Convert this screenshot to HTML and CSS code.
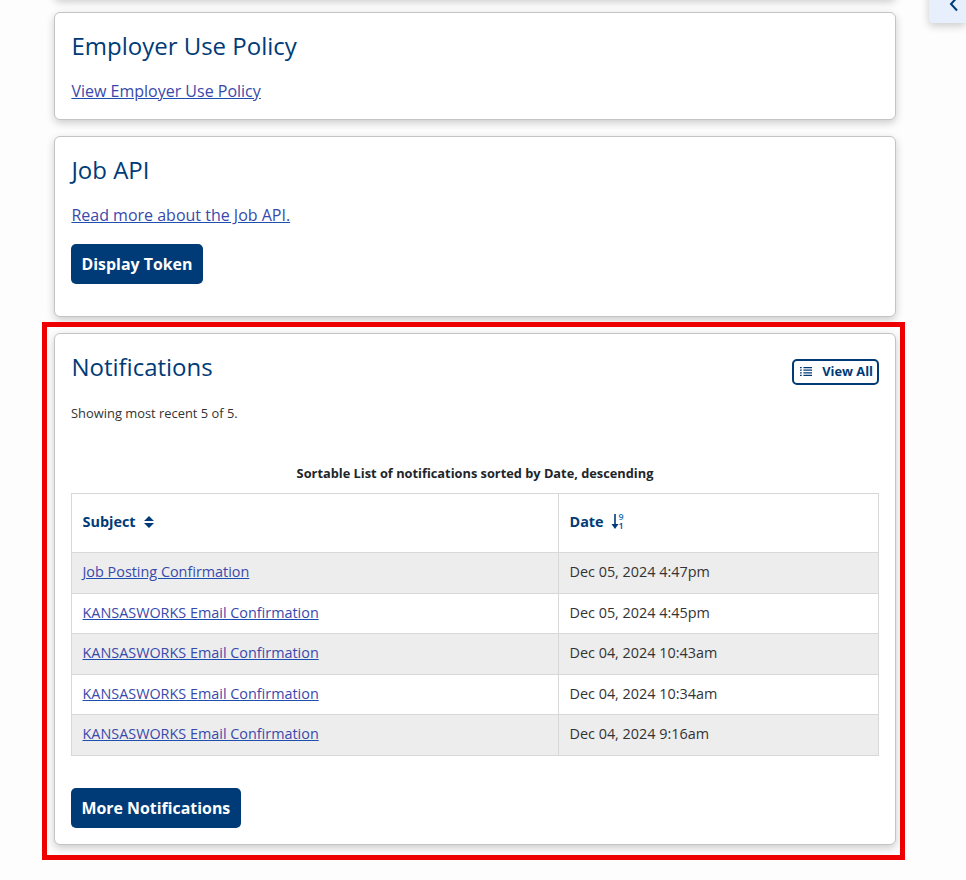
FILE: index.html
```html
<!DOCTYPE html>
<html lang="en">
<head>
<meta charset="utf-8">
<title>Employer Dashboard</title>
<link rel="stylesheet" href="styles.css">
</head>
<body>
<aside class="side-tab">
  <svg class="side-chevron" viewBox="0 0 10 16" width="10" height="16" aria-hidden="true"><path d="M8 1.5 2 8l6 6.5" fill="none" stroke="#003b77" stroke-width="2"/></svg>
</aside>
<main class="column">
  <div class="card card-cut"></div>
  <section class="card policy">
    <h2 class="card-title">Employer Use Policy</h2>
    <a class="link" href="#">View Employer Use Policy</a>
  </section>
  <section class="card api">
    <h2 class="card-title">Job API</h2>
    <p class="api-link"><a class="link" href="#">Read more about the Job API.</a></p>
    <button class="btn" type="button">Display Token</button>
  </section>
  <div class="highlight">
    <section class="card notifications">
      <div class="notif-head">
        <h2 class="card-title">Notifications</h2>
        <a class="view-all" href="#">
          <svg viewBox="0 0 14 12" width="12" height="11" aria-hidden="true"><path d="M0 1.5h2M4 1.5h10M0 4.5h2M4 4.5h10M0 7.5h2M4 7.5h10M0 10.5h2M4 10.5h10" stroke="#003b77" stroke-width="1.4" fill="none"/></svg>
          <span>View All</span>
        </a>
      </div>
      <p class="showing">Showing most recent 5 of 5.</p>
      <table class="table">
        <caption class="caption">Sortable List of notifications sorted by Date, descending</caption>
        <thead>
          <tr>
            <th class="col-subject"><span class="th-in">Subject
              <svg viewBox="0 0 10 12" width="10" height="12" aria-hidden="true"><path d="M5 0 10 5H0zM5 12 0 7h10z" fill="#003b77"/></svg></span></th>
            <th><span class="th-in">Date
              <span class="sort-num"><svg viewBox="0 0 8 15" width="8" height="15" aria-hidden="true"><path d="M4 0v11" stroke="#003b77" stroke-width="1.6"/><path d="M0.5 10h7L4 15z" fill="#003b77"/></svg><span class="digits"><b class="digit-top">9</b><b class="digit-bottom">1</b></span></span></span></th>
          </tr>
        </thead>
        <tbody>
          <tr class="odd"><td><a class="link" href="#">Job Posting Confirmation</a></td><td>Dec 05, 2024 4:47pm</td></tr>
          <tr><td><a class="link" href="#">KANSASWORKS Email Confirmation</a></td><td>Dec 05, 2024 4:45pm</td></tr>
          <tr class="odd"><td><a class="link" href="#">KANSASWORKS Email Confirmation</a></td><td>Dec 04, 2024 10:43am</td></tr>
          <tr><td><a class="link" href="#">KANSASWORKS Email Confirmation</a></td><td>Dec 04, 2024 10:34am</td></tr>
          <tr class="odd"><td><a class="link" href="#">KANSASWORKS Email Confirmation</a></td><td>Dec 04, 2024 9:16am</td></tr>
        </tbody>
      </table>
      <button class="btn" type="button">More Notifications</button>
    </section>
  </div>
</main>
</body>
</html>
```
FILE: styles.css
```css
* { box-sizing: border-box; }
html, body { height: 880px; overflow: hidden; }
body {
  margin: 0;
  background: #fdfdfd;
  font-family: "Open Sans", "Liberation Sans", sans-serif;
  color: #333;
  position: relative;
}
.side-tab {
  position: absolute;
  top: -10px;
  right: 0;
  width: 37px;
  height: 33px;
  background: #e6effb;
  border-radius: 0 0 0 4px;
  box-shadow: 0 3px 8px rgba(0,0,0,.2);
}
.side-chevron { position: absolute; left: 20px; top: 6px; }
.column { display: flex; flex-direction: column; }
.card {
  width: 842px;
  margin-left: 54px;
  background: #fff;
  border: 1px solid #c4c4c4;
  border-radius: 6px;
  box-shadow: 0 3px 8px rgba(0,0,0,.2);
}
.card-cut { height: 20px; margin-top: -21px; margin-bottom: 13px; }
.policy { height: 108px; padding: 16px; margin-bottom: 16px; }
.api { height: 181px; padding: 16px; margin-bottom: 5px; }
.card-title {
  margin: 0 0 0 .4px;
  font-size: 24px;
  font-weight: 400;
  line-height: 34px;
  color: #003b77;
}
.link { color: #3949ab; text-decoration: underline; text-decoration-color: #1d4fb0; font-size: 16px; }
.policy .link { display: block; margin: 17px 0 0 .4px; line-height: 22px; }
.api-link { margin: 17px 0 18px .4px; line-height: 22px; }
.btn {
  display: block;
  height: 40px;
  padding: 0 10.5px;
  border: 0;
  border-radius: 5px;
  background: #003b77;
  color: #fff;
  font: 700 15.9px/40px "Open Sans", "Liberation Sans", sans-serif;
}
.highlight {
  margin-left: 42px;
  width: 863px;
  height: 538px;
  border: 5px solid #ee0000;
  padding: 6px 4px 0 7px;
}
.notifications { margin-left: 0; height: 512px; padding: 16px 16px 0 16px; }
.notif-head { display: flex; justify-content: space-between; align-items: flex-start; }
.view-all {
  display: flex;
  align-items: center;
  gap: 10px;
  margin-top: 9px;
  height: 26px;
  padding: 0 4px 3px 6px;
  border: 2px solid #003b77;
  border-radius: 5px;
  color: #003b77;
  font-size: 12.8px;
  font-weight: 700;
  text-decoration: none;
}
.view-all svg { margin-top: 2px; }
.showing { margin: 18px 0 0; font-size: 12.9px; line-height: 20px; }
.table {
  width: 100%;
  margin-top: 40px;
  border-collapse: collapse;
  table-layout: fixed;
  font-size: 14.4px;
}
.caption {
  caption-side: top;
  height: 30px;
  font-size: 12.8px;
  font-weight: 700;
  line-height: 20px;
  color: #212529;
  text-align: center;
}
.table th, .table td {
  border: 1px solid #d8d8d8;
  padding: 0 10.5px 2px;
  text-align: left;
}
.col-subject { width: 487px; }
.table th { height: 59px; padding-bottom: 3px; color: #003b77; font-size: 14.4px; font-weight: 700; }
.table td { height: 40.5px; }
.table td .link { font-size: 14.4px; }
.odd { background: #ededed; }
.th-in { display: inline-flex; align-items: center; gap: 8px; }
.sort-num { display: inline-flex; align-items: center; gap: 0; margin-left: -1px; }
.digits { display: inline-flex; flex-direction: column; margin-top: -2px; font-size: 9px; line-height: 9px; }
.digits b { font-weight: 600; }
.digit-top { color: #1d6fb0; }
.digit-bottom { color: #27349b; }
.notifications .btn { margin-top: 32px; }
```
